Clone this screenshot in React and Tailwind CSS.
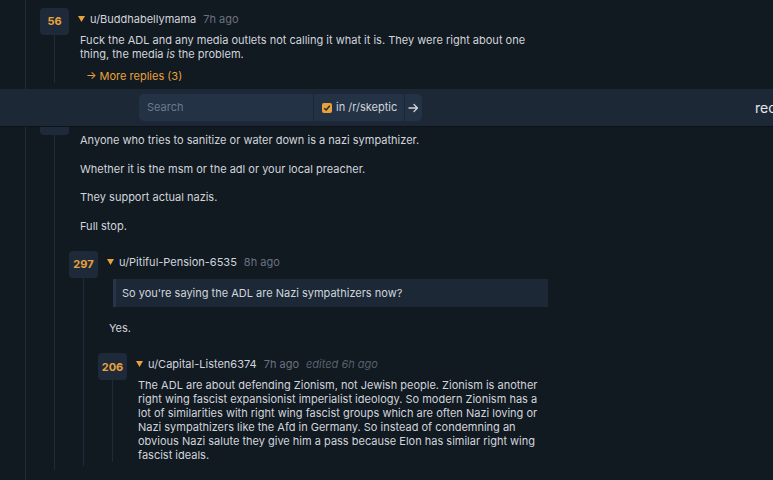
import React from "react";

const FONT = { fontFamily: "Inter, 'Noto Sans', sans-serif" };

function Tri() {
  return (
    <svg width="7" height="6" viewBox="0 0 7 6" className="shrink-0">
      <polygon points="0,0 7,0 3.5,6" fill="#e9a23b" />
    </svg>
  );
}

function Score({ n }) {
  return (
    <div className="w-[29px] h-[27px] rounded-[4px] bg-[#1e2a3a] flex items-center justify-center text-[11px] font-bold text-[#e9a23b] shrink-0">
      {n}
    </div>
  );
}

function Comment({ score, user, time, edited, body, replies, more }) {
  return (
    <div className="flex pb-[4px]">
      <div className="w-[29px] flex flex-col items-center shrink-0">
        <Score n={score} />
        <div className="flex-1 w-px bg-[#1f2b3a]" />
      </div>
      <div className="flex-1 min-w-0 pl-[9px]">
        <div className="h-[22px] flex items-center text-[11px]">
          <Tri />
          <span className="ml-[5px] text-[#d1d5db]">{user}</span>
          <span className="ml-[7px] text-[#6b7280]">{time}</span>
          {edited && (
            <span className="ml-[7px] italic text-[#58606c]">{edited}</span>
          )}
        </div>
        <div className="mt-[3px] pl-[2px] text-[11px] leading-[14px] text-[#d1d5db] flex flex-col gap-[14.6px]">
          {body}
        </div>
        {more && (
          <div className="mt-[8px] ml-[8px] text-[11px] leading-[14px] text-[#e9a23b]">
            → More replies ({more})
          </div>
        )}
        {replies && <div className="-ml-[9px] mt-[18px] flex flex-col gap-[20px]">{replies}</div>}
      </div>
    </div>
  );
}

export default function App() {
  return (
    <div className="relative w-[773px] h-[480px] overflow-hidden bg-[#111921]" style={FONT}>
      <div className="ml-[25px] border-l border-[#1f2b3a] pl-[14px] pt-[8px] w-[523px] min-h-[480px] flex flex-col gap-[21px]">
        <Comment
          score="56"
          user="u/Buddhabellymama"
          time="7h ago"
          more="3"
          body={
            <p>
              Fuck the ADL and any media outlets not calling it what it is. They were right about one
              thing, the media <i>is</i> the problem.
            </p>
          }
        />
        <Comment
          score="418"
          user="u/Thorainsfeld"
          time="8h ago"
          body={
            <>
              <p>Anyone who tries to sanitize or water down is a nazi sympathizer.</p>
              <p>Whether it is the msm or the adl or your local preacher.</p>
              <p>They support actual nazis.</p>
              <p>Full stop.</p>
            </>
          }
          replies={
            <Comment
              score="297"
              user="u/Pitiful-Pension-6535"
              time="8h ago"
              body={
                <>
                  <div className="mt-[3px] ml-[4px] bg-[#1c2836] border-l-[3px] border-[#26354a] pl-[6px] h-[28px] flex items-center text-[#d1d5db]">
                    So you're saying the ADL are Nazi sympathizers now?
                  </div>
                  <p>Yes.</p>
                </>
              }
              replies={
                <Comment
                  score="206"
                  user="u/Capital-Listen6374"
                  time="7h ago"
                  edited="edited 6h ago"
                  body={
                    <p>
                      The ADL are about defending Zionism, not Jewish people. Zionism is another right
                      wing fascist expansionist imperialist ideology. So modern Zionism has a lot of
                      similarities with right wing fascist groups which are often Nazi loving or Nazi
                      sympathizers like the Afd in Germany. So instead of condemning an obvious Nazi
                      salute they give him a pass because Elon has similar right wing fascist ideals.
                    </p>
                  }
                />
              }
            />
          }
        />
      </div>

      {/* sticky search bar overlaying the thread */}
      <div className="absolute left-0 right-0 top-[89px] h-[37px] bg-[#1c2836] shadow-[0_1px_0_#0c1218] flex items-center">
        <div className="ml-[139px] h-[27px] flex rounded-[5px] overflow-hidden bg-[#233345] text-[11px]">
          <div className="w-[174px] flex items-center pl-[8px] text-[#6b7a8c]">Search</div>
          <div className="w-[91px] border-l border-[#1b2735] flex items-center pl-[8px] gap-[4px] text-[#d1d5db]">
            <div className="w-[10px] h-[10px] rounded-[2px] bg-[#e9a23b] flex items-center justify-center">
              <svg width="8" height="8" viewBox="0 0 8 8">
                <polyline points="1.2,4.2 3.2,6 6.8,1.8" fill="none" stroke="#1c2836" strokeWidth="1.4" />
              </svg>
            </div>
            <span>in /r/skeptic</span>
          </div>
          <div className="w-[18px] border-l border-[#1b2735] flex items-center justify-center">
            <svg width="11" height="10" viewBox="0 0 11 10">
              <path d="M1 5h8.5M6 1.5L9.5 5 6 8.5" fill="none" stroke="#d1d5db" strokeWidth="1.3" strokeLinecap="round" strokeLinejoin="round" />
            </svg>
          </div>
        </div>
        <div className="flex-1" />
        <div className="w-[18px] shrink-0 whitespace-nowrap text-[14px] text-[#e5e7eb]">recent</div>
      </div>
    </div>
  );
}
